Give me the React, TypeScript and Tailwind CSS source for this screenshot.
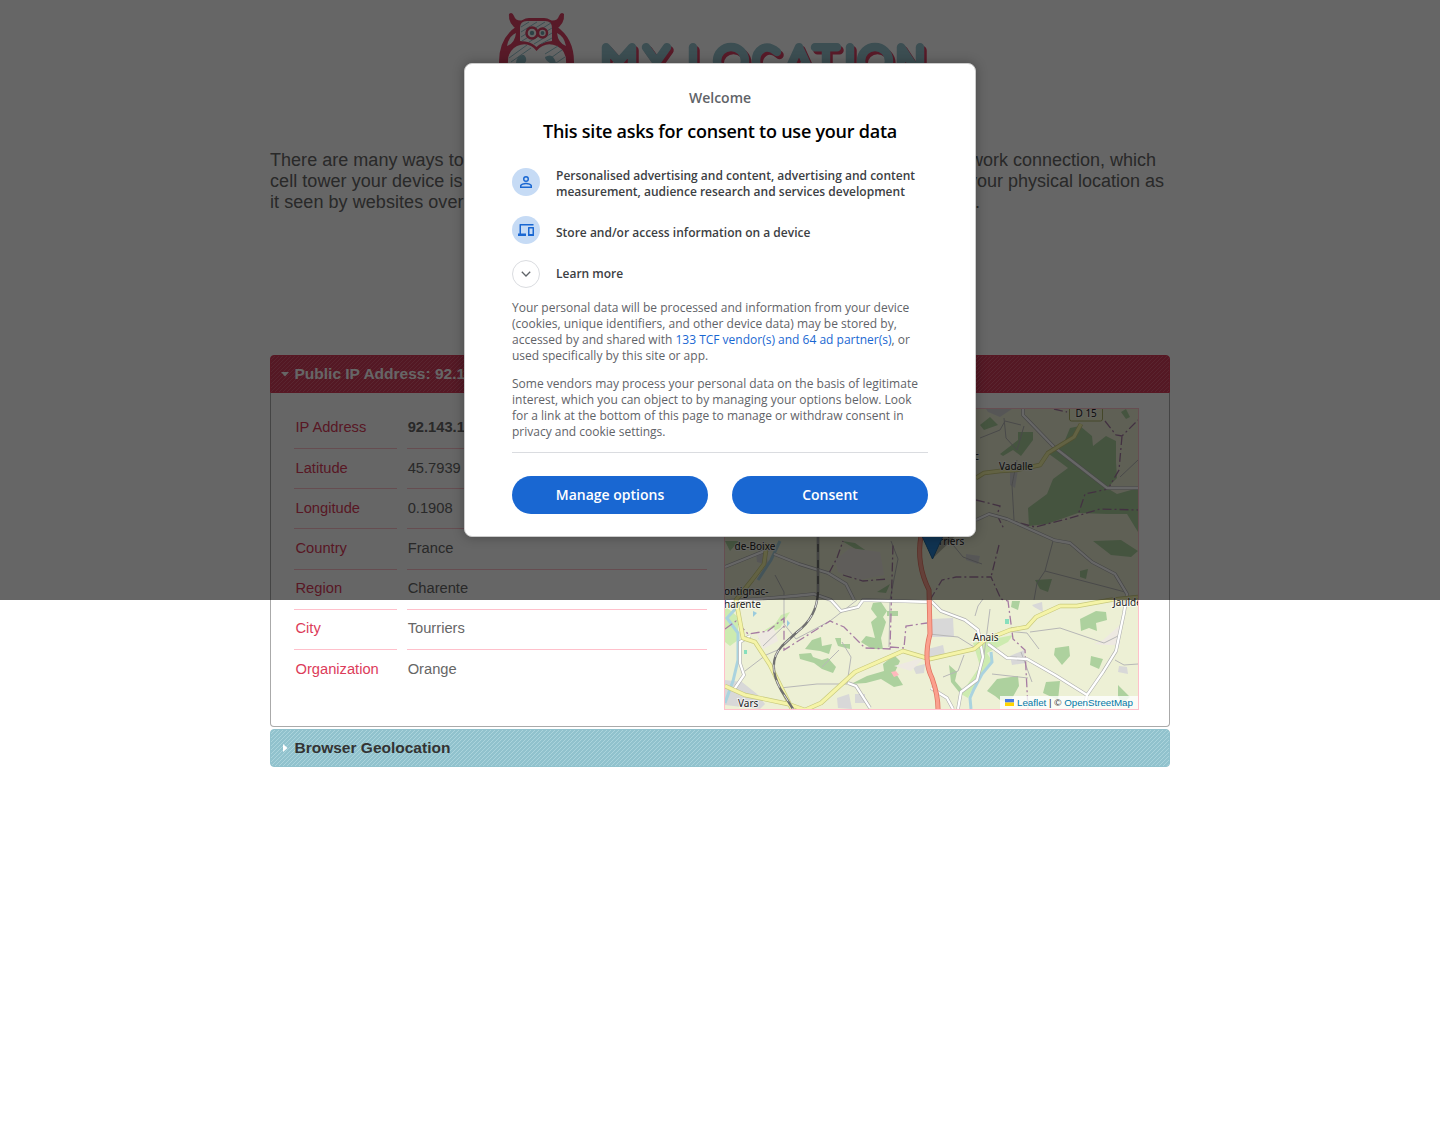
import React from 'react';

const rows = [
  ['IP Address', '92.143.1.1'],
  ['Latitude', '45.7939'],
  ['Longitude', '0.1908'],
  ['Country', 'France'],
  ['Region', 'Charente'],
  ['City', 'Tourriers'],
  ['Organization', 'Orange'],
];

const minorRoads =
  'M725 567 L772 548 M774 554 L799 564 828 573 846 584 854 600 M733 691 L744 675 740 663 740 642 750 636 M725 601 L758 599 794 596 814 594 831 600 841 611 858 607 863 600 930 602 M848 683 L856 686 870 708 M930 600 L941 611 965 620 978 630 983 657 977 680 961 692 958 709 M988 644 L1007 658 1027 659 1055 675 1087 695 1103 672 1116 651 1124 613 1127 594 1115 574 1092 562 1070 543 1053 540 M1023 409 V415 L1054 447 1107 488 H1138 M976 520 L989 514 1007 519 1054 540 M1087 695 L1084 709 M931 688 L947 698 953 709';
const yellowRoads =
  'M725 686 L745 695 788 704 805 710 821 703 855 672 903 651 930 659 974 649 985 640 1010 630 1027 627 1036 617 1060 606 1077 606 1110 600 1138 597 M767 543 L764 564 752 580 736 600 743 638 755 642 770 665 792 709 M976 478 L984 473 1000 471 1016 470 1040 465 1048 453 1074 437 1081 424';
const mainRoad = 'M921 536 Q916 564 929 590 L930 634 Q923 660 932 678 Q938 695 938 709';
const railway = 'M818 536 V592 Q817 617 797 632 L782 646 Q766 663 781 690 L793 709';

function Logo() {
  return (
    <svg className="absolute left-[490px] top-0" width="450" height="104" viewBox="490 0 450 104">
      <path d="M509 14 Q512 11 514 16 Q516 22 524 20 L518 30 Q508 24 509 14Z M564 14 Q561 11 559 16 Q557 22 549 20 L555 30 Q565 24 564 14Z" fill="#dc4165" />
      <path d="M517 26 Q499 38 499 62 V90 H574 V62 Q574 38 556 26 Q551 18 544 18 H529 Q522 18 517 26Z" fill="#dc4165" />
      <path d="M520 41 V28 Q520 21 527 21 H545 Q552 21 552 28 V41 Q541 42 536.500 47 Q531 41 520 41Z" fill="#fff" />
      <path d="M508 64 Q507 51 517 46 Q529 41 536.500 51 Q545 41 557 46 Q567 51 566 64Z" fill="#fff" />
      <path d="M507 46 Q509 36 516 33 Q515 43 507 46Z M566 46 Q564 36 557 33 Q558 43 566 46Z" fill="#fff" />
      <path d="M521 27 L529 22 M521 32 L537 22 M521 37 L545 22 M522 41 L551 23 M529 42 L552 28 M534 44 L552 33 M541 44 L552 38 M509 58 L527 45 M511 62 L531 48 M545 54 L558 46 M548 60 L562 50 M556 63 L565 57" stroke="#96c3cd" />
      <circle cx="532" cy="33" r="5.500" fill="#fff" stroke="#dc4165" strokeWidth="2.500" />
      <circle cx="542.500" cy="33" r="4.500" fill="#fff" stroke="#dc4165" strokeWidth="2.500" />
      <circle cx="532" cy="33" r="2.200" fill="#6fa0aa" />
      <circle cx="542.500" cy="33" r="1.900" fill="#6fa0aa" />
      <path d="M516 63 Q517 54 524 55 Q528 59 525 63Z M545 57 Q553 52 556 63 H550 Q545 60 545 57Z" fill="#90bdc7" />
      {[{ color: '#dc4165', offset: 'translate(2.500 3)' }, { color: '#96c3cd', offset: 'translate(0 0)' }].map(({ color, offset }) => (
        <g key={color} transform={offset} fill="none" stroke={color} strokeWidth="8.500" strokeLinecap="round" strokeLinejoin="round">
          <path d="M606 76 V47.200 L619 62 L632 47.200 V76 M646 47.200 L656.500 62 L667 47.200 M656.500 62 V76 M693 47.200 V76 H707" />
          <circle cx="731" cy="61" r="14" />
          <path d="M777 52 C765 42 756 51 756 61 C756 71 767 79 777 71 M786 76 L799 47.200 L812 76 M792 69 H806 M815 47.200 H837 M826 47.200 V76 M850 47.200 V76 M901 76 V47.200 L920 76 V47.200" />
          <circle cx="875" cy="61" r="14" />
        </g>
      ))}
    </svg>
  );
}

function LocationMap() {
  return (
    <div className="relative h-[302px] w-[415px] border border-[#ffc0cb] bg-[#edf0d5]">
      <svg className="absolute inset-0" width="413" height="300" viewBox="725 409 413 300">
        <g fill="#add19e">
          <path d="M1018 432 L1033 432 1033 440 1021 456 1013 450 1003 456 1000 454 1018 440Z M1070 428 L1080 426 1092 436 1093 446 1106 436 1116 441 1116 462 1117 478 1107 488 1117 494 1138 488 V532 L1127 514 1107 514 1078 513 1047 524 1029 526 1028 508 1047 494 1053 479 1068 468 1060 462 1049 454 1063 445Z M1121 412 L1126 409 1130 417 1126 419Z M980 425 L990 417 998 425 984 430Z" />
          <path d="M805 649 L812 640 L821 637 822 646 832 644 829 654 820 651Z M799 654 L811 653 813 657 822 660 828 658 836 667 833 673 822 669 814 663 800 659Z M835 638 H841 V644 H850 V649 L838 646Z M873 603 L881 602 L887 611 883 617 886 622 881 638 883 649 872 649 861 642 866 636 875 638 871 622 877 617 871 609Z M851 684 L867 676 884 671 883 664 894 655 900 661 895 672 903 685 894 687 881 679 866 683Z M887 611 H898 V616 H887Z M842 541 L855 543 868 552 864 554Z M852 567 a5 4 0 1 0 10 0 a5 4 0 1 0 -10 0 M877 592 L890 584 886 593Z" />
          <path d="M987 691 L997 679 1018 676 1019 686 1010 702 1000 700 995 696Z M1055 648 L1069 646 1070 656 1062 665 1054 655Z M1091 656 L1103 659 1099 669 1090 665Z M1046 682 L1060 681 1058 700 1043 693Z M1080 619 L1096 611 1106 612 1107 620 1096 623 1097 631 1089 628 1081 631Z M1012 601 L1020 601 1018 610 1011 607Z M1093 541 L1121 540 1138 551 1131 557 1111 555Z M1035 580 L1052 579 1048 592 1040 589Z M1080 571 L1088 569 1086 579 1080 577Z M949 665 L957 672 955 681 967 695 959 692 951 682Z M1118 685 L1130 697 1122 704 1118 696Z M725 541 L739 541 730 551Z" />
        </g>
        <path fill="#cdebb0" d="M725 606 L738 617 738 640 730 646 725 642Z M765 630 L775 624 781 615 790 612 780 628 758 639Z M973 643 L1013 635 1008 642 987 653 992 661 972 690 968 698 961 694 980 666Z" />
        <g fill="#d8d8d8">
          <path d="M725 680 L742 682 757 694 765 704 760 709 725 705Z M932 619 L953 618 954 637 932 637Z M928 649 L943 645 945 655 927 662Z M913 667 L925 664 924 673 916 674Z M1010 656 L1024 650 1025 663 1012 665Z M1119 666 L1127 667 1128 674 1118 672Z M855 694 H865 V703 H855Z M837 698 L849 694 852 709 838 708Z M756 553 L766 548 768 565 757 562Z M1010 470 L1018 470 1015 488 1010 485Z M986 409 H1012 L1000 417 988 412Z M1032 605 L1042 602 1043 612 1034 607Z M966 554 L980 556 978 564 966 560Z" />
        </g>
        <path d="M1094 644 L1103 640 1120 625 1120 645 1105 645Z M894 666 L925 657 911 671Z M757 634 L774 628 778 641 763 649Z M835 560 L850 548 880 552 884 575 860 580 838 572Z" fill="#eee9e2" />
        <path fill="none" stroke="#aad3df" strokeWidth="3" d="M725 703 L733 681 738 660 738 633 727 618 739 605 M780 541 L771 560 758 580 M991 652 L992 662 982 674 974 689 970 698 971 709" />
        <path fill="none" stroke="#b7b7b7" d="M775 575 L784 592 784 624 796 639 830 621 857 600 M784 626 L763 646 M745 671 L766 655 780 649 M780 688 L817 684 847 684 851 657 842 642 M822 667 L839 650 M891 541 L898 559 894 579 890 600 889 647 M929 634 L958 637 974 647 M975 616 L978 606 983 599 M1030 632 L1060 628 1104 643 1120 635 M1138 664 L1124 665 1115 660 M1005 631 L1027 633 1039 649 M990 609 L984 655 M949 540 L963 557 982 564 M1053 541 L1045 571 1037 583 1034 600 M980 438 L1000 430 1005 421 1021 425 M1014 520 L1012 485 1017 460 M1120 477 L1138 460 M943 677 L958 671 964 655 M1032 682 L1021 652 M1045 571 L1110 588 1125 592 M992 674 L1028 678 M1004 418 L1006 438 1017 450 1024 426" />
        <path fill="none" stroke="#a67ca3" strokeWidth="1.300" strokeDasharray="9 3 2 3" d="M725 629 L736 621 748 634 768 631 784 618 784 650 830 621 844 627 865 648 890 649 893 544 M890 647 L904 648 906 626 927 623 M829 573 L837 558 843 541 M843 575 L863 581 888 579 M930 600 L942 580 956 577 991 577 1001 599 1008 601 1013 639 1025 650 1028 709 M999 545 L991 577 M976 500 L1000 506 997 515 1004 529 M1004 519 L1035 527 1067 519 1100 509 1138 510 M1054 409 L1067 412 M1105 421 L1116 435 1122 436 1138 420 M1122 436 L1119 470 1108 489 1085 494 1078 515" />
        <g fill="none" strokeWidth="3.500" strokeLinejoin="round">
          <path stroke="#b0b0b0" d={minorRoads} />
          <path stroke="white" strokeWidth="2.300" d={minorRoads} />
          <path stroke="#c8c97c" strokeWidth="4.500" d={yellowRoads} />
          <path stroke="#f5f4a8" strokeWidth="3.200" d={yellowRoads} />
          <path d={mainRoad} stroke="#df725f" strokeWidth="5" />
          <path d={mainRoad} stroke="#fba08e" strokeWidth="3.500" />
          <path d={railway} stroke="#707070" strokeWidth="2.400" />
          <path d={railway} stroke="white" strokeWidth=".8" strokeDasharray="8 8" />
        </g>
        <path d="M891 672 L896 671 899 675 894 677Z" fill="#ffb9bd" />
        <path d="M744 650 h3 v4 h-3Z M1005 619 h4 v5 h-4Z" fill="#87dfbd" />
        <path d="M753 611 l4 2-4 4Z M787 620 l3 3-3 4Z" fill="#9acbdd" />
        <rect x="1069.500" y="404" width="33" height="17" rx="2" fill="#f1f2d0" stroke="#acb16a" />
        <g fontFamily="Noto Sans" fontSize="10" fill="#222" stroke="#ffffff" strokeWidth="1.800" strokeOpacity=".65" paintOrder="stroke">
          <text x="1075.500" y="417">D 15</text><text x="999" y="470">Vadalle</text><text x="974" y="460">c</text>
          <text x="734.500" y="549.500">de-Boixe</text><text x="724" y="595">ontignac-</text><text x="724" y="608">harente</text>
          <text x="939" y="544.500">rriers</text><text x="973" y="641">Anais</text><text x="1113" y="606">Jauldes</text><text x="738" y="706.500">Vars</text>
        </g>
        <path d="M932 559 L952 540 959 530 H934Z" fill="#222" opacity=".3" />
        <path d="M932.500 559 L922 536 Q918 518 932 518 Q947 518 943 536Z" fill="#2a81cb" stroke="#1f669e" />
      </svg>
      <div className="absolute bottom-0 right-0 flex h-[13px] w-[138px] items-center bg-white/80 pl-[5px] text-[9.750px] leading-[13px] text-[#333]">
        <svg width="9" height="7" viewBox="0 0 9 7" className="mr-[3px]"><path fill="#4c7be1" d="M0 0h9v3.500H0z" /><path fill="#ffd500" d="M0 3.500h9V7H0z" /></svg>
        <span className="text-[#0078a8]">Leaflet</span><span className="whitespace-pre"> | © </span><span className="text-[#0078a8]">OpenStreetMap</span>
      </div>
    </div>
  );
}

function ConsentDialog() {
  return (
    <div className="absolute left-[464px] top-[63px] h-[474px] w-[512px] rounded-lg border border-[#ccc] bg-white px-[47px] font-['Open_Sans',sans-serif] shadow-[0_0_12px_rgba(0,0,0,.3)]">
      <p className="pt-6 text-center text-[14px] font-semibold leading-5 text-[#5f6368]">Welcome</p>
      <h1 className="mt-[11px] whitespace-nowrap text-center text-[18px] font-semibold leading-6 tracking-[-0.240px] text-black">This site asks for consent to use your data</h1>
      <div className="mt-[25px] flex h-8 gap-4 text-[12px] font-semibold leading-4 text-[#3c4043]">
        <div className="flex size-7 shrink-0 items-center justify-center rounded-full bg-[#c6dbf5]"><svg width="18" height="18" viewBox="0 0 24 24" fill="#1967d2"><path d="M12 5.900a2.100 2.100 0 1 1 0 4.200 2.100 2.100 0 0 1 0-4.200m0 9c2.970 0 6.100 1.460 6.100 2.100v1.100H5.900V17c0-.640 3.130-2.100 6.100-2.100M12 4a4 4 0 1 0 0 8 4 4 0 0 0 0-8m0 9c-2.670 0-8 1.340-8 4v3h16v-3c0-2.660-5.330-4-8-4" /></svg></div>
        <p className="whitespace-nowrap">Personalised advertising and content, advertising and content<br />measurement, audience research and services development</p>
      </div>
      <div className="mt-4 flex h-7 gap-4 text-[12px] font-semibold text-[#3c4043]">
        <div className="flex size-7 items-center justify-center rounded-full bg-[#c6dbf5]"><svg width="16" height="12" viewBox="0 0 16 12" fill="#1967d2"><path d="M2 0h13.500v1.500H3v8h5V12H0V9.500h1.500V.5q0-.5.500-.500Z" /><path fillRule="evenodd" d="M10.500 3h5q.5 0 .5.500v8q0 .5-.5.500h-5q-.5 0-.5-.5v-8q0-.5.500-.500Zm1 1.500v5.500h3V4.500Z" /></svg></div>
        <p className="pt-[9px] leading-4">Store and/or access information on a device</p>
      </div>
      <div className="mt-4 flex h-7 items-center gap-4 text-[12px] font-semibold text-[#3c4043]">
        <div className="flex size-7 items-center justify-center rounded-full border border-[#dadce0]"><svg width="10" height="6" viewBox="0 0 10 6" fill="none" stroke="#5f6368" strokeWidth="1.300"><path d="M.8 .8 5 5 9.200 .8" /></svg></div>
        <p>Learn more</p>
      </div>
      <div className="mt-[12px] whitespace-nowrap text-[12px] leading-4 text-[#5f6368]">
        <p>Your personal data will be processed and information from your device<br />(cookies, unique identifiers, and other device data) may be stored by,<br />accessed by and shared with <span className="text-[#1967d2]">133 TCF vendor(s) and 64 ad partner(s)</span>, or<br />used specifically by this site or app.</p>
        <p className="mt-3">Some vendors may process your personal data on the basis of legitimate<br />interest, which you can object to by managing your options below. Look<br />for a link at the bottom of this page to manage or withdraw consent in<br />privacy and cookie settings.</p>
      </div>
      <div className="mt-3 flex gap-6 border-t border-[#dadce0] pt-[23px] text-[14px] font-semibold text-white">
        <button className="h-[38px] flex-1 rounded-full bg-[#1967d2] pb-[2px]">Manage options</button>
        <button className="h-[38px] flex-1 rounded-full bg-[#1967d2] pb-[2px]">Consent</button>
      </div>
    </div>
  );
}

function Stripes({ id, color }: { id: string; color: string }) {
  return (
    <svg className="absolute inset-0 size-full" aria-hidden="true">
      <defs><pattern id={id} width="4" height="4" patternUnits="userSpaceOnUse"><path d="M-1 1 1-1M0 4 4 0M3 5 5 3" stroke={color} strokeWidth=".8" /></pattern></defs>
      <rect width="100%" height="100%" fill={`url(#${id})`} />
    </svg>
  );
}

export default function App() {
  return (
    <div className="relative h-[1142px] overflow-hidden bg-white font-['Liberation_Sans',Arial,sans-serif] text-[#666]">
      <Logo />
      <main className="mx-auto w-[900px] pt-[150px]">
        <div className="h-[205px] text-[18px] leading-[21px]">
          <div className="flex justify-between"><span className="tracking-[0.030px]">There are many ways to</span><span className="mr-[14px]">network connection, which</span></div>
          <div className="flex justify-between"><span className="tracking-[0.060px]">cell tower your device is</span><span className="mr-[6px]">your physical location as</span></div>
          <div className="flex justify-between"><span className="tracking-[0.060px]">it seen by websites over</span><span className="mr-[190px]">.</span></div>
        </div>
        <h2 className="relative flex h-[38px] items-center overflow-hidden rounded-t border border-[#dc3c5a] bg-[#d33c5b] pl-[10px] text-[15.500px] font-bold text-white">
          <Stripes id="red-stripes" color="#e4677f" />
          <svg width="8" height="5" viewBox="0 0 8 5" className="relative mr-[5.500px]"><path d="M0 0h8L4 4.500Z" fill="white" /></svg><span className="relative">Public IP Address: 92.143.1.1</span>
        </h2>
        <section className="flex h-[334px] rounded-b border border-t-0 border-[#aaa] px-[22px] pt-[15px]">
          <div className="mr-[17px] w-[414px] text-[14.700px]">
            {rows.map(([name, value], index) => (
              <div key={name} className={`grid grid-cols-[103px_300px] gap-[10px] pl-px ${index ? 'h-[40.200px]' : 'h-[41px]'}`}>
                <div className={`flex items-center pb-[2px] pl-[1.500px] text-[#dc3c5a] ${index < 6 ? 'border-b border-[#ffc0cb]' : ''}`}>{name}</div>
                <div className={`flex items-center pb-[2px] pl-[.700px] ${index < 6 ? 'border-b border-[#ffc0cb]' : ''} ${index ? '' : 'font-bold'}`}>{value}</div>
              </div>
            ))}
          </div>
          <LocationMap />
        </section>
        <h2 className="relative mt-[2px] flex h-[38px] items-center overflow-hidden rounded border border-[#91c2cd] bg-[#91c2cd] pl-[12px] text-[15.500px] font-bold text-[#333]">
          <Stripes id="blue-stripes" color="#b1d8df" />
          <svg width="5" height="8" viewBox="0 0 5 8" className="relative mr-[6.500px]"><path d="M0 0v8L4.500 4Z" fill="white" /></svg><span className="relative">Browser Geolocation</span>
        </h2>
      </main>
      <div className="absolute inset-x-0 top-0 h-[600px] bg-black/60" />
      <ConsentDialog />
    </div>
  );
}
